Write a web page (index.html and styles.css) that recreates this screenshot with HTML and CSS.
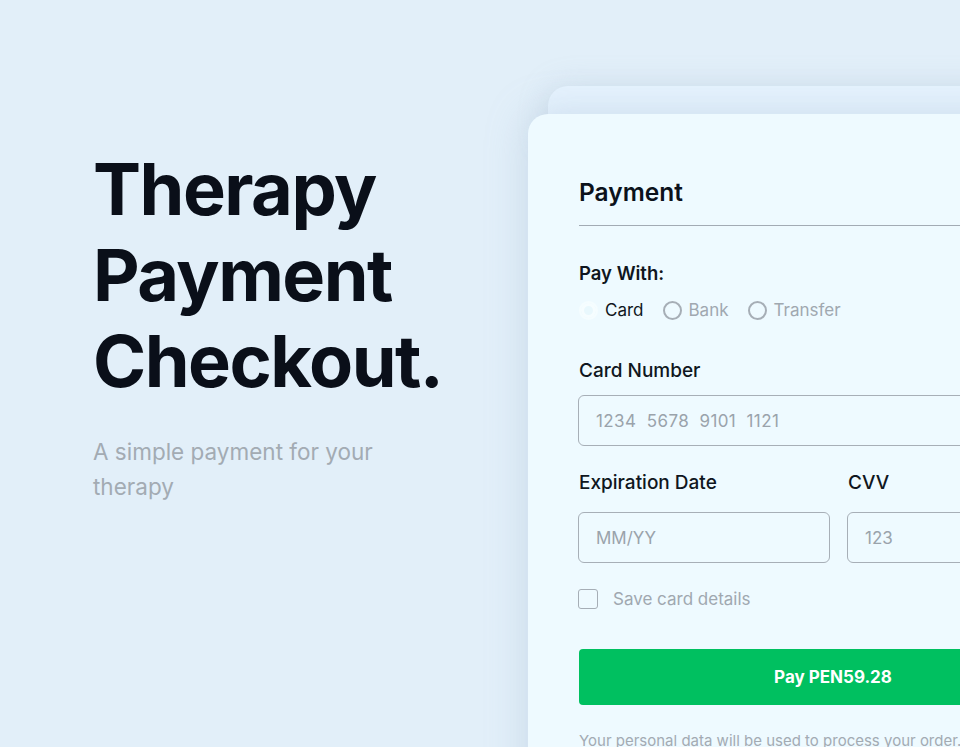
FILE: index.html
```html
<!DOCTYPE html>
<html lang="en">
<head>
<meta charset="utf-8">
<title>Therapy Payment Checkout</title>
<link rel="stylesheet" href="styles.css">
</head>
<body>
<main class="page">
  <section class="intro">
    <h1 class="title">Therapy<br>Payment<br>Checkout.</h1>
    <p class="subtitle">A simple payment for your therapy</p>
  </section>
  <section class="stage">
    <div class="card">
      <h2 class="card-title">Payment</h2>
      <div class="label pay-with">Pay With:</div>
      <div class="radios">
        <label class="radio active"><span class="dot"></span>Card</label>
        <label class="radio"><span class="dot"></span>Bank</label>
        <label class="radio"><span class="dot"></span>Transfer</label>
      </div>
      <div class="label field-label">Card Number</div>
      <div class="input wide">1234&nbsp; 5678&nbsp; 9101&nbsp; 1121</div>
      <div class="row">
        <div class="col exp">
          <div class="label field-label2">Expiration Date</div>
          <div class="input">MM/YY</div>
        </div>
        <div class="col cvv">
          <div class="label field-label2">CVV</div>
          <div class="input">123</div>
        </div>
      </div>
      <label class="save"><span class="box"></span>Save card details</label>
      <button class="pay">Pay PEN59.28</button>
      <p class="note">Your personal data will be used to process your order. It will support your experience.</p>
    </div>
  </section>
</main>
</body>
</html>
```
FILE: styles.css
```css
* { box-sizing: border-box; }
html, body {
  margin: 0;
  height: 100%;
}
body {
  background: #e2eff9;
  font-family: Inter, "Noto Sans", sans-serif;
  overflow: hidden;
  width: 960px;
  height: 747px;
}
.page {
  display: grid;
  grid-template-columns: 528px 600px;
  height: 747px;
}
.intro {
  padding: 146px 0 0 93px;
}
.title {
  margin: 0;
  font-size: 72px;
  line-height: 86px;
  font-weight: 700;
  color: #0a0f19;
  letter-spacing: -1.5px;
}
.subtitle {
  margin: 30px 0 0;
  width: 320px;
  font-size: 22.5px;
  line-height: 35px;
  color: #a3abb3;
  font-weight: 400;
}
.stage {
  padding-top: 114px;
}
.card {
  position: relative;
  width: 620px;
  height: 700px;
  background: #eefaff;
  border-radius: 20px;
  padding: 63px 0 0 51px;
  box-shadow: 0 0 40px rgba(150, 175, 200, 0.35);
}
.card::before {
  content: "";
  position: absolute;
  left: 20px;
  top: -28px;
  right: -20px;
  height: 60px;
  background: #e6f3fe;
  border-radius: 20px 20px 0 0;
  z-index: -1;
  box-shadow: 0 0 30px rgba(150, 175, 200, 0.25);
}
.card-title {
  margin: 0;
  font-size: 24.5px;
  line-height: 30px;
  font-weight: 600;
  color: #0c121b;
  padding-bottom: 18px;
  border-bottom: 1px solid #a2abb4;
  width: 600px;
}
.label {
  color: #0f1620;
  font-weight: 500;
}
.pay-with {
  margin-top: 35px;
  font-size: 18.5px;
  line-height: 24px;
  font-weight: 600;
}
.radios {
  display: flex;
  margin-top: 15px;
  height: 20px;
  align-items: center;
}
.radio {
  display: flex;
  align-items: center;
  font-size: 17px;
  color: #a0a8b0;
  margin-right: 19px;
}
.radio.active { color: #0f1620; }
.dot {
  width: 19px;
  height: 19px;
  border-radius: 50%;
  border: 2px solid #a6aeb6;
  margin-right: 7px;
}
.radio.active .dot {
  border-color: #f5fdff;
  background: #e9f8fd;
  box-shadow: inset 0 0 0 3px #f6fdff;
}
.field-label {
  margin-top: 39px;
  font-size: 19px;
  line-height: 24px;
}
.input {
  height: 51px;
  border: 1.5px solid #a7afb7;
  border-radius: 6px;
  padding: 0 17px;
  display: flex;
  align-items: center;
  color: #9aa3ab;
  font-size: 17px;
  background: transparent;
}
.input.wide {
  margin-top: 12px;
  width: 600px;
  margin-left: -1px;
  letter-spacing: 0.4px;
}
.row {
  display: flex;
  gap: 17px;
  margin-top: 25px;
  margin-left: -1px;
}
.col .label { padding-left: 1px; }
.exp { width: 252px; }
.cvv { width: 239px; }
.cvv .input { width: 300px; }
.field-label2 {
  font-size: 19px;
  line-height: 24px;
  margin-bottom: 17px;
}
.save {
  display: flex;
  align-items: center;
  margin-top: 26px;
  margin-left: -1px;
  font-size: 17px;
  color: #a0a8b0;
  height: 20px;
}
.box {
  width: 20px;
  height: 20px;
  border: 1.5px solid #a6aeb6;
  border-radius: 3px;
  margin-right: 15px;
}
.pay {
  display: block;
  margin-top: 40px;
  width: 508px;
  height: 56px;
  border: 0;
  border-radius: 4px;
  background: #00c060;
  color: #ffffff;
  font-family: Inter, "Noto Sans", sans-serif;
  font-size: 17px;
  font-weight: 700;
}
.note {
  margin: 25px 0 0;
  width: 392px;
  font-size: 15px;
  line-height: 22px;
  color: #a3abb3;
}
```
